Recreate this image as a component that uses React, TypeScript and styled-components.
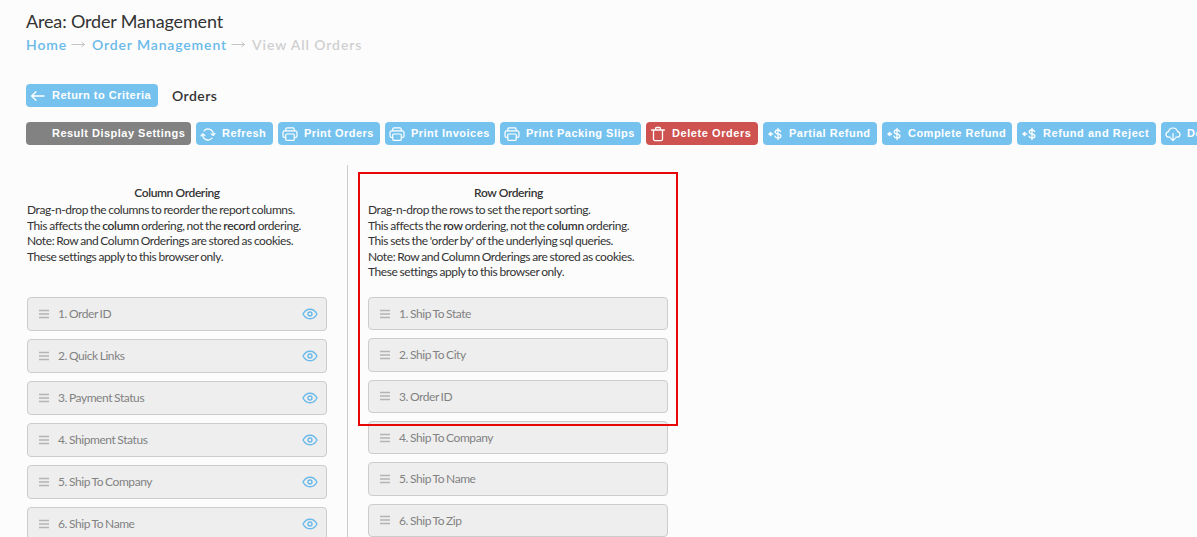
import { ReactNode } from "react";
import { createGlobalStyle, styled } from "styled-components";

type IconName = "back" | "refresh" | "print" | "trash" | "refund" | "download";

type Variant = "blue" | "gray" | "red";

type ActionButtonProps = {
  label: string;
  width: number;
  icon?: IconName;
  variant?: Variant;
  spacing?: number;
};

const buttonColors: Record<Variant, string> = {
  blue: "#76c2ef",
  gray: "#828282",
  red: "#ce524f",
};

const actions: ActionButtonProps[] = [
  { label: "Result Display Settings", width: 165, variant: "gray" },
  { label: "Refresh", width: 77, icon: "refresh" },
  { label: "Print Orders", width: 102, icon: "print" },
  { label: "Print Invoices", width: 110, icon: "print" },
  { label: "Print Packing Slips", width: 141, icon: "print" },
  {
    label: "Delete Orders",
    width: 112,
    icon: "trash",
    variant: "red",
    spacing: 0.57,
  },
  { label: "Partial Refund", width: 114, icon: "refund", spacing: 0.5 },
  { label: "Complete Refund", width: 130, icon: "refund" },
  { label: "Refund and Reject", width: 139, icon: "refund", spacing: 0.57 },
  { label: "Download Orders", width: 130, icon: "download" },
];

const columns = [
  "Order ID",
  "Quick Links",
  "Payment Status",
  "Shipment Status",
  "Ship To Company",
  "Ship To Name",
];

const rows = [
  "Ship To State",
  "Ship To City",
  "Order ID",
  "Ship To Company",
  "Ship To Name",
  "Ship To Zip",
];

const App = (): JSX.Element => {
  return (
    <MyPage>
      <GlobalStyle />
      <MyAreaTitle>Area: Order Management</MyAreaTitle>
      <MyBreadcrumb>
        <MyCrumb>Home</MyCrumb>
        <CrumbArrow />
        <MyCrumb>Order Management</MyCrumb>
        <CrumbArrow />
        <MyCrumb current>View All Orders</MyCrumb>
      </MyBreadcrumb>
      <MyTitleRow>
        <ActionButton label="Return to Criteria" width={132} icon="back" />
        <MyTitle>Orders</MyTitle>
      </MyTitleRow>
      <MyToolbar>
        {actions.map((action) => (
          <ActionButton key={action.label} {...action} />
        ))}
      </MyToolbar>
      <MyPanels>
        <MyPanel divided>
          <MyPanelTitle width={300}>Column Ordering</MyPanelTitle>
          <MyDescription>
            <p>Drag-n-drop the columns to reorder the report columns.</p>
            <p>
              This affects the <b>column</b> ordering, not the <b>record</b>{" "}
              ordering.
            </p>
            <p>Note: Row and Column Orderings are stored as cookies.</p>
            <p>These settings apply to this browser only.</p>
          </MyDescription>
          <MyList>
            {columns.map((name, i) => (
              <MyItem key={name} height={34}>
                <DragHandle />
                <MyItemLabel>{`${i + 1}. ${name}`}</MyItemLabel>
                <EyeIcon />
              </MyItem>
            ))}
          </MyList>
        </MyPanel>
        <MyPanel>
          <MyPanelTitle width={281}>Row Ordering</MyPanelTitle>
          <MyDescription>
            <p>Drag-n-drop the rows to set the report sorting.</p>
            <p>
              This affects the <b>row</b> ordering, not the <b>column</b>{" "}
              ordering.
            </p>
            <p>This sets the 'order by' of the underlying sql queries.</p>
            <p>Note: Row and Column Orderings are stored as cookies.</p>
            <p>These settings apply to this browser only.</p>
          </MyDescription>
          <MyList>
            {rows.map((name, i) => (
              <MyItem key={name} height={33.35}>
                <DragHandle />
                <MyItemLabel>{`${i + 1}. ${name}`}</MyItemLabel>
              </MyItem>
            ))}
          </MyList>
          <MyHighlight />
        </MyPanel>
      </MyPanels>
    </MyPage>
  );
};

export default App;

const ActionButton = ({
  label,
  width,
  icon,
  variant = "blue",
  spacing = 0.48,
}: ActionButtonProps): JSX.Element => (
  <MyButton width={width} variant={variant} spacing={spacing}>
    <MyIconSlot>{icon && icons[icon]}</MyIconSlot>
    {label}
  </MyButton>
);

const icons: Record<IconName, ReactNode> = {
  back: (
    <svg width="16" height="16" viewBox="0 0 16 16">
      <path d="M14 8H1.800M6 3.800L1.600 8 6 12.200" strokeWidth="1.400" />
    </svg>
  ),
  refresh: (
    <svg width="16" height="16" viewBox="0 0 16 16">
      <path d="M4 4.800A5.300 5.300 0 0 1 13.300 8.500M12 12.200A5.300 5.300 0 0 1 2.700 8.500" />
      <path d="M1 9.800l1.700-2 2.100 1.700M11.200 7.800l2.100 1.600L15 7.400" />
    </svg>
  ),
  print: (
    <svg width="16" height="16" viewBox="0 0 16 16">
      <path d="M3.700 11.500H2.800A1.800 1.800 0 0 1 1 9.700V6.600a1.800 1.800 0 0 1 1.800-1.800h10.400A1.800 1.800 0 0 1 15 6.600v3.100a1.800 1.800 0 0 1-1.800 1.800h-.9" />
      <rect x="3.700" y="8" width="8.600" height="6.300" rx="1" />
      <path d="M3.700 4.600V3.400a1.500 1.500 0 0 1 1.500-1.500h5.600a1.500 1.500 0 0 1 1.500 1.500v1.200" />
    </svg>
  ),
  trash: (
    <svg width="16" height="16" viewBox="0 0 16 16">
      <path
        d="M3.500 4v9a1.500 1.500 0 0 0 1.500 1.600h6a1.500 1.500 0 0 0 1.500-1.600V4M1.600 4h12.800M5.600 4V2.400a.9.9 0 0 1 .9-.9h3a.9.9 0 0 1 .9.9V4"
        strokeWidth="1.300"
      />
    </svg>
  ),
  refund: (
    <svg width="16" height="16" viewBox="0 0 16 16">
      <path
        d="M13.600 5.600C13.200 4.600 12.300 4 11 4c-1.700 0-2.800.8-2.800 2 0 2.700 5.700 1.300 5.700 4 0 1.300-1.200 2-2.900 2-1.600 0-2.700-.7-3-1.900M11 2.500v11"
        strokeWidth="1.300"
      />
      <path d="M5.600 8H2.200M3.800 6.400L2 8l1.800 1.600" strokeWidth="1.400" />
    </svg>
  ),
  download: (
    <svg width="16" height="16" viewBox="0 0 16 16">
      <path d="M5.200 11.200H3.600C2 11.200 1 10 1 8.500 1 7 2 6 3.500 5.700 4 3.500 5.800 2 8 2c2.400 0 4 1.500 4.500 3.700C14 5.900 15 7 15 8.500c0 1.500-1 2.700-2.600 2.700h-1.600M8 7.500v7M5.800 12.400L8 14.600l2.200-2.200" />
    </svg>
  ),
};

const CrumbArrow = (): JSX.Element => (
  <MyCrumbArrow width="15" height="10" viewBox="0 0 15 10">
    <path d="M0.500 5.500h13M10.500 3L13.500 5.500 10.500 8" />
  </MyCrumbArrow>
);

const DragHandle = (): JSX.Element => (
  <MyHandle width="10" height="10" viewBox="0 0 10 10">
    <path d="M0 1.500h10M0 5h10M0 8.500h10" />
  </MyHandle>
);

const EyeIcon = (): JSX.Element => (
  <MyEye width="16" height="12" viewBox="0 0 16 12">
    <path d="M1 6C2.600 3 5 1.200 8 1.200S13.400 3 15 6c-1.600 3-4 4.800-7 4.800S2.600 9 1 6z" />
    <circle cx="8" cy="6" r="2" />
  </MyEye>
);

const GlobalStyle = createGlobalStyle`
  body {
    margin: 0;
    background: #fcfcfc;
    overflow: hidden;
  }

  * {
    box-sizing: border-box;
  }
`;

const MyPage = styled.div`
  height: 537px;
  overflow: hidden;
  padding: 9px 0 0 26px;
  font-family: Lato, sans-serif;
  color: #333;
`;

const MyAreaTitle = styled.div`
  font-size: 18px;
  line-height: 24px;
  letter-spacing: -0.16px;
`;

const MyBreadcrumb = styled.div`
  display: flex;
  align-items: center;
  height: 22px;
  font-size: 14px;
`;

const MyCrumb = styled.span<{ current?: boolean }>`
  font-weight: 600;
  letter-spacing: ${(props) => (props.current ? 0.9 : 0.86)}px;
  color: ${(props) => (props.current ? "#d0d0d0" : "#69bae9")};
`;

const MyCrumbArrow = styled.svg`
  margin: 0 6px 0 4px;
  fill: none;
  stroke: #c4c4c4;
`;

const MyTitleRow = styled.div`
  display: flex;
  align-items: center;
  gap: 14px;
  height: 23px;
  margin-top: 29px;
`;

const MyTitle = styled.span`
  font-size: 14px;
  font-weight: 600;
  letter-spacing: 0.45px;
`;

const MyToolbar = styled.div`
  display: flex;
  gap: 5px;
  margin-top: 15px;
`;

const MyButton = styled.button<{
  width: number;
  variant: Variant;
  spacing: number;
}>`
  display: flex;
  align-items: center;
  flex-shrink: 0;
  width: ${(props) => props.width}px;
  height: 23px;
  padding: 0 0 1px 4px;
  border: none;
  border-radius: 4px;
  background: ${(props) => buttonColors[props.variant]};
  color: #fff;
  font-family: "Liberation Sans", Arial, sans-serif;
  font-size: 11px;
  font-weight: bold;
  letter-spacing: ${(props) => props.spacing}px;
  white-space: nowrap;
`;

const MyIconSlot = styled.span`
  flex-shrink: 0;
  width: 22px;
  height: 16px;
  margin-top: 2px;

  svg {
    display: block;
    fill: none;
    stroke: #fff;
    stroke-width: 1.2;
    stroke-linecap: round;
    stroke-linejoin: round;
  }
`;

const MyPanels = styled.div`
  display: flex;
  margin-top: 20px;
`;

const MyPanel = styled.div<{ divided?: boolean }>`
  position: relative;
  width: ${(props) => (props.divided ? 322 : 340)}px;
  height: 380px;
  padding: 20px 20px 0 ${(props) => (props.divided ? 1 : 20)}px;
  ${(props) => (props.divided ? `border-right: 1px solid #ccc;` : ``)}
`;

const MyPanelTitle = styled.div<{ width: number }>`
  width: ${(props) => props.width}px;
  font-size: 12px;
  font-weight: 600;
  letter-spacing: -0.4px;
  line-height: 16px;
  text-align: center;
`;

const MyDescription = styled.div`
  height: 96px;
  padding-top: 1px;
  font-size: 12px;
  line-height: 15.6px;
  letter-spacing: -0.41px;
  word-spacing: -0.6px;
  white-space: nowrap;

  p {
    margin: 0;
  }

  b {
    font-weight: 600;
    letter-spacing: -0.3px;
  }
`;

const MyList = styled.div`
  display: flex;
  flex-direction: column;
  gap: 8px;
`;

const MyItem = styled.div<{ height: number }>`
  display: flex;
  align-items: center;
  flex-shrink: 0;
  width: 300px;
  height: ${(props) => props.height}px;
  padding: 0 8px 0 11px;
  border: 1px solid #ccc;
  border-radius: 4px;
  background: #eee;
`;

const MyItemLabel = styled.span`
  flex: 1;
  margin-left: 9px;
  padding-bottom: 0.6px;
  color: #828282;
  font-size: 12px;
  letter-spacing: -0.42px;
  word-spacing: -0.7px;
`;

const MyHandle = styled.svg`
  stroke: #b4b4b4;
  stroke-width: 1.7;
`;

const MyEye = styled.svg`
  fill: none;
  stroke: #69bae9;
  stroke-width: 1.4;
`;

/* frame drawn over the rows that drive the sorting */
const MyHighlight = styled.div`
  position: absolute;
  top: 7px;
  left: 10px;
  width: 320px;
  height: 254px;
  border: 2px solid #e60808;
  pointer-events: none;
`;
